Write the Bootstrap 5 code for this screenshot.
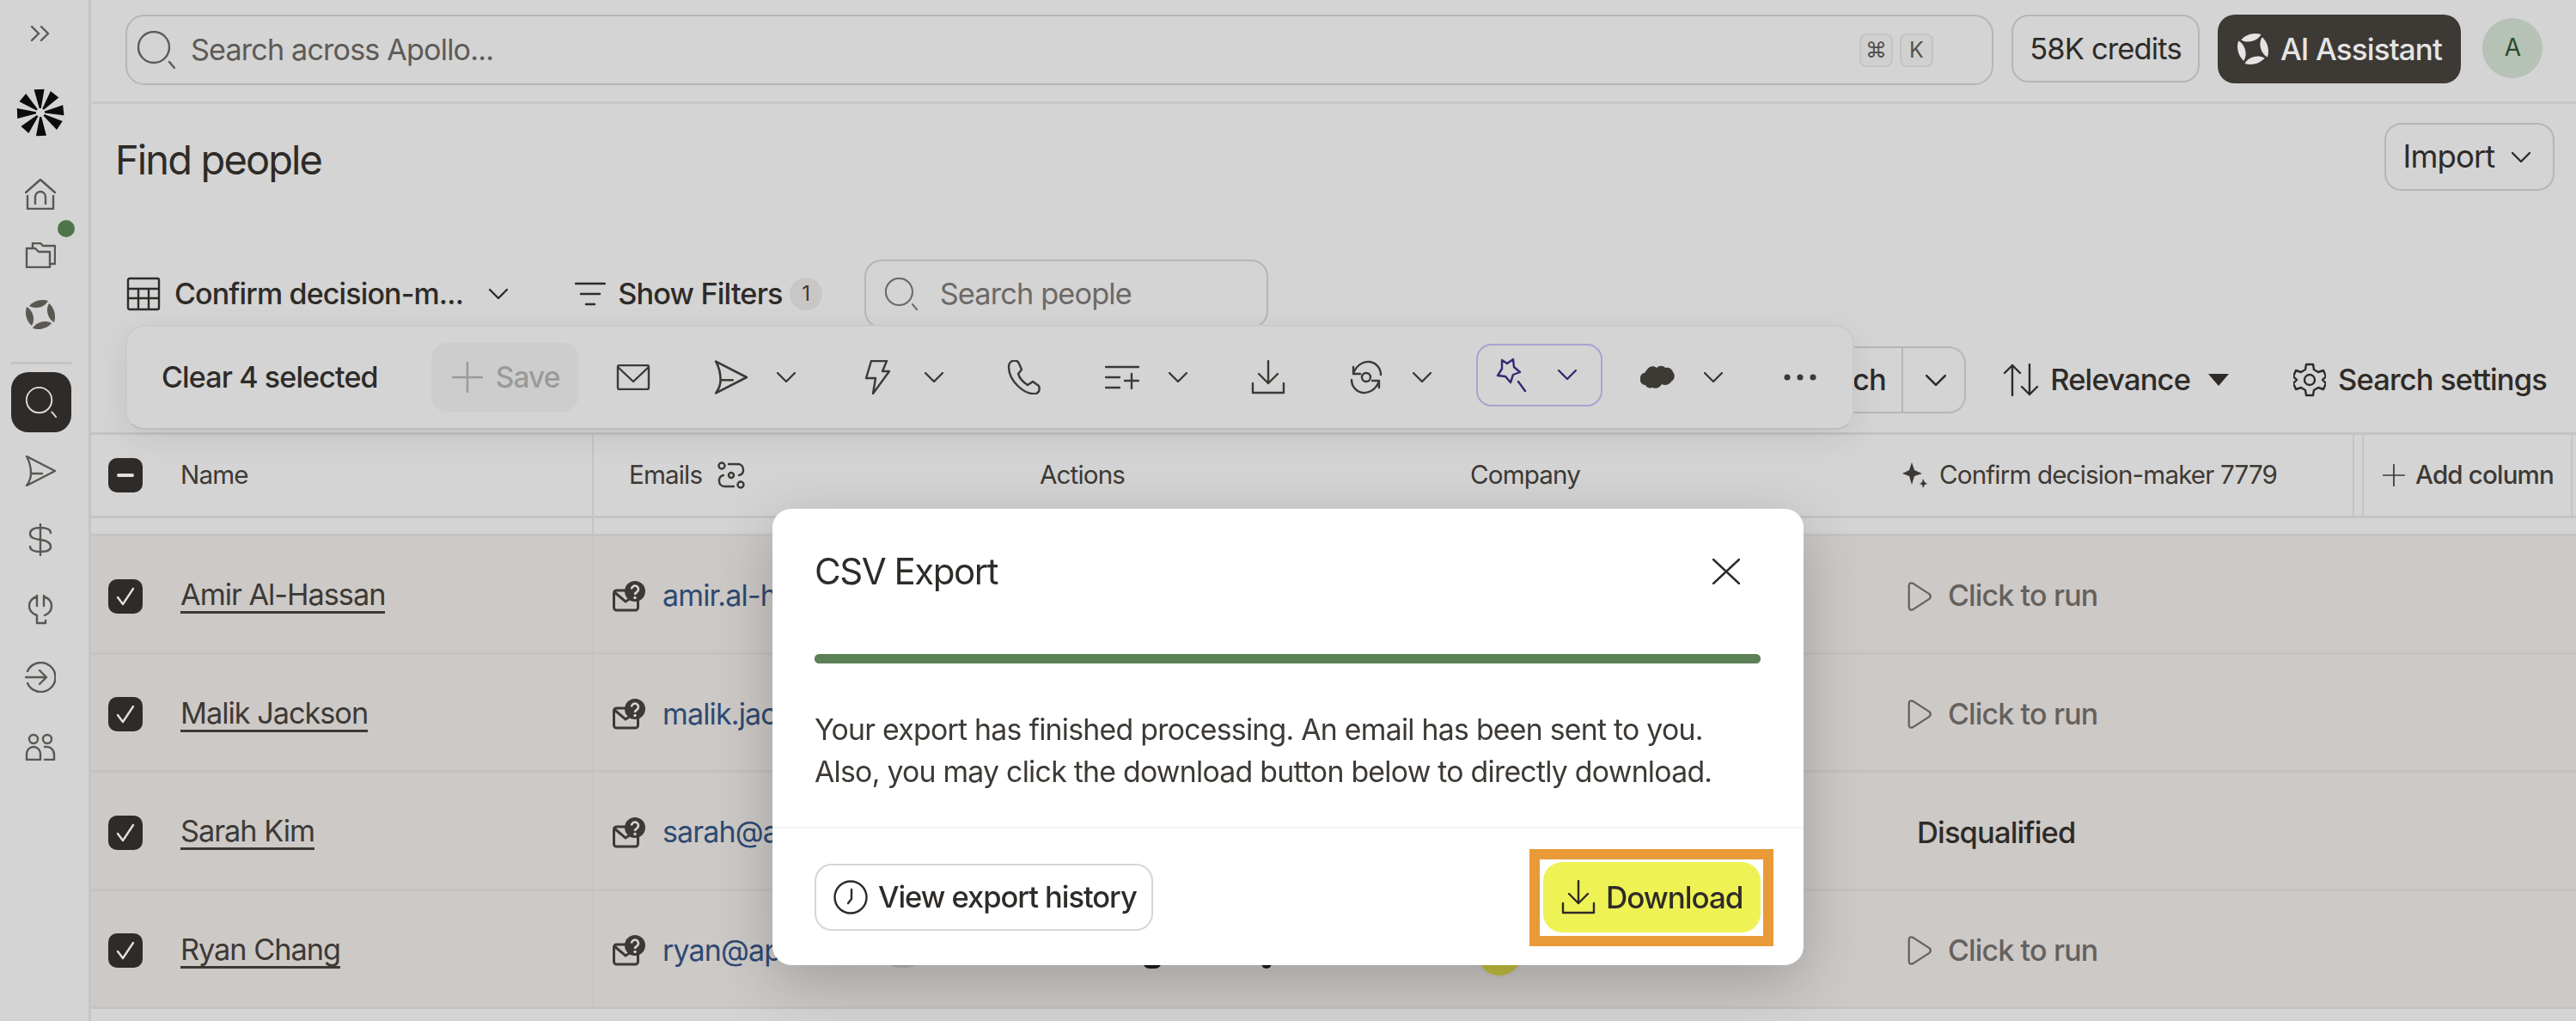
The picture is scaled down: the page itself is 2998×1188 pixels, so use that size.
<!DOCTYPE html>
<html lang="en">
<head>
<meta charset="utf-8">
<title>Find people</title>
<link href="https://cdn.jsdelivr.net/npm/bootstrap@5.3.0/dist/css/bootstrap.min.css" rel="stylesheet">
<style>
html,body{height:1188px;overflow:hidden}
body{background:#d4d4d4;font-family:Inter,"Liberation Sans",sans-serif;color:#2e2b28;font-size:34.3px;letter-spacing:-.025em;line-height:1.2}
svg.ic{display:block;flex:none;fill:none;stroke:currentColor;stroke-width:2.4;stroke-linecap:round;stroke-linejoin:round}
.side{width:106px;height:1188px;border-right:3px solid #c6c4c4;color:#5b5753;position:relative;flex:none}
.side-slot{display:flex;justify-content:center;position:absolute;left:0;width:94px}
.act-search{background:#2e2b28;color:#d9d9d9;width:70px;height:70px;border-radius:20px;display:flex;align-items:center;justify-content:center;margin-left:1px}
.green-dot{position:absolute;left:67px;top:256px;width:20px;height:20px;border-radius:50%;background:#4e7549}
.side-rule{position:absolute;left:12px;width:71px;top:421px;height:3px;background:#c6c4c4}
.main-col{flex:1;min-width:0;height:1188px}
.top-bar{height:121px;border-bottom:3px solid #c9c7c7;padding:17px 39px 0 40px;gap:21px}
.search-all{width:2174px;height:82px;border:2px solid #b9b5b5;border-radius:22px;padding:0 68px 0 12px;color:#5e5a57;font-size:34.2px}
.search-all-text{margin-left:2px}
.kbd-key{width:39px;height:39px;border:2px solid #c5c3c3;background:#d0d0d0;border-radius:8px;font-size:25px;color:#55514e;letter-spacing:0}
.outline-pill{border:2px solid #b9b5b5;border-radius:20px;height:79px;background:transparent;color:#2e2b28;font-size:34.5px;letter-spacing:-.025em}
.dark-pill{background:#3d3935;color:#e4e4e4;border-radius:20px;height:80px;width:283px;font-size:35px;font-weight:500;letter-spacing:-.025em;gap:13px}
.dark-pill:hover{background:#3d3935;color:#e4e4e4}
.user-dot{width:70px;height:70px;border-radius:50%;background:#b5c2b5;color:#2f4a2a;font-size:28px}
.import-btn{font-size:36.5px;width:198px;gap:20px;padding-right:6px!important}
.title-row{height:181px;padding:22px 25px 0 28px}
.page-title{font-size:47px;font-weight:400;margin:15px 0 0;letter-spacing:-.04em}
.filter-row{height:83px;padding-left:41px}
.confirm-text{font-size:34px}
.show-filters{height:80px;gap:14px;margin-left:78px}
.count-dot{width:38px;height:38px;border-radius:50%;background:#c9c7c5;font-size:24px;color:#3d3935;margin-left:-6px}
.people-search{width:470px;height:80px;border:2px solid #b9b5b5;border-radius:20px;color:#6d6966;padding-left:22px;margin-left:49px;gap:26px}
.sort-row{height:118px;padding:0 34px 4px 0;font-weight:500;font-size:34.5px}
.split-box{width:240px;height:78px;border:2px solid #b9b5b5;border-radius:0 20px 20px 0;border-left:0;margin-right:43px;padding-left:36px}
.split-rule{width:2px;height:100%;background:#b9b5b5;margin:0 26px 0 18px}
.data-row{display:grid;grid-template-columns:585px 499px 500px 505px 545px 11px 243px 4px}
.head-row{height:100px;border-top:3px solid #c4c2c2;border-bottom:3px solid #c6c4c4;font-size:29.6px;color:#3d3935}
.thin-row{height:21px;border-bottom:3px solid #c6c3c1}
.pick-row{height:137.5px;background:#cdc9c6;border-bottom:3px solid #c5c2bf;padding-top:5px}
.vline{border-right:2px solid #c6c4c4}
.pick-row .vline{margin-top:-5px;padding-top:5px}
.cell{display:flex;align-items:center;min-width:0}
.box-check{width:40px;height:40px;border-radius:10px;background:#2e2b28;color:#e0e0e0;margin:0 44px 0 20px;flex:none;display:flex;align-items:center;justify-content:center}
.person{color:#3d3935;font-size:34.3px;border-bottom:3px solid #3d3935;line-height:1.12;letter-spacing:-.03em}
.mail-addr{color:#2e4a73;font-size:34px;margin-left:20px;white-space:nowrap}
.run-hint{color:#65615e;font-size:34px;font-weight:500;gap:18px}
.verdict{font-weight:500;font-size:34.5px;margin-left:36px;color:#2e2b28}
.chip-blank{position:relative;top:-3px;height:46px;width:53px;border-radius:24px;background:#b4b4b4;margin:0 113px 0 auto;flex:none}
.chip-yellow{position:relative;top:6px;height:46px;width:48px;border-radius:24px;background:#c3bf3e;box-shadow:0 0 0 3px #c9c5c3}
.bit{position:relative;top:17px;height:8px;background:#1e1c1a;border-radius:0 0 8px 8px}
.float-bar{position:absolute;left:146px;top:378px;width:2012px;height:122px;background:#d4d4d4;border:2px solid #cbcaca;border-bottom-color:#bfbdbb;border-radius:22px;box-shadow:0 10px 36px rgba(0,0,0,.08);padding-left:40px;gap:74px;z-index:5;color:#3d3935}
.tool{display:flex;align-items:center;gap:34px}
.clear-label{font-weight:500;font-size:34px;color:#2e2b28;margin-right:-12px}
.save-off{width:171px;height:80px;border-radius:18px;background:#cdcdcd;color:#9c9a98;font-weight:500;font-size:33.5px;gap:15px;margin-right:-30px;padding-left:24px}
.tool-wide{margin-left:6px}
.ai-tool{width:147px;height:73px;border:2px solid #a9a3d1;border-radius:18px;color:#352a72;margin:-6px -30px 0 -22px;padding-left:21px}
.more-tool{margin-left:-3px}
.csv-modal{z-index:10;background:transparent;padding-top:592px}
.csv-dialog{max-width:1200px;width:1200px;margin:0 auto 0}
.csv-content{height:531px;border:0;border-radius:22px;box-shadow:0 20px 70px rgba(0,0,0,.22);color:#2e2b28}
.csv-head{height:110px;padding:36px 50px 0 49px;border:0;align-items:center}
.csv-title{font-size:42px;font-weight:400;letter-spacing:-.035em;line-height:1}
.csv-body{padding:59px 50px 0 49px;height:260px;flex:none}
.csv-bar{height:11px;border-radius:6px;background:#5b8055}
.csv-text{font-size:33.8px;line-height:49px;margin:52px 0 0;color:#3d3935;letter-spacing:-.022em;white-space:nowrap}
.csv-foot{border-top:2px solid #f2f2f2;padding:0 50px 0 49px;height:161px;flex-wrap:nowrap;justify-content:space-between;align-items:flex-start}
.history-btn{margin:41px 0 0;width:394px;height:78px;border:2px solid #d6d6d6;border-radius:20px;background:#fff;font-size:34.5px;font-weight:500;letter-spacing:-.03em;gap:12px;padding:0 0 0 20px;color:#2e2b28}
.dl-frame{border:12px solid #e89a38;width:284px;height:113px;margin:24px -15px 0 0;padding:3px 3px 4px 4px;background:#fff}
.dl-btn{width:100%;height:100%;border:0;border-radius:22px;background:#eef255;font-size:35px;font-weight:500;letter-spacing:-.03em;gap:12px;padding:0 0 0 21px;color:#2e2b28}
.dl-btn:hover{background:#eef255}
</style>
</head>
<body>
<svg width="0" height="0" class="position-absolute">
<defs>
<symbol id="i-search" viewBox="0 0 44 44"><circle cx="19" cy="19" r="18"/><path d="M37 36l6 7"/></symbol>
<symbol id="i-chev" viewBox="0 0 22 12"><path d="M1 1l10 10L21 1"/></symbol>
<symbol id="i-dbl" viewBox="0 0 24 18"><path d="M2 1l8 8-8 8M13 1l8 8-8 8"/></symbol>
<symbol id="i-home" viewBox="0 0 36 36"><path d="M1 16L18 1l17 15M3 20v15h30V20M12 29V21a6 6 0 0 1 12 0v8"/></symbol>
<symbol id="i-folder" viewBox="0 0 36 30"><path d="M2 29V7h10l4 4h13v18zM9 5V1h9l3 3h14v21h-5"/></symbol>
<symbol id="i-ball" viewBox="0 0 36 36"><g fill="currentColor" stroke="none"><path d="M5 8C9 3 18-1 27 2 24 8 14 13 5 8z"/><path d="M5 8C9 3 18-1 27 2 24 8 14 13 5 8z" transform="rotate(90 18 18)"/><path d="M5 8C9 3 18-1 27 2 24 8 14 13 5 8z" transform="rotate(180 18 18)"/><path d="M5 8C9 3 18-1 27 2 24 8 14 13 5 8z" transform="rotate(270 18 18)"/></g></symbol>
<symbol id="i-send" viewBox="0 0 36 36"><path d="M2 1l33 17L2 35q5-7 5-14h13M7 21Q7 10 2 1"/></symbol>
<symbol id="i-dollar" viewBox="0 0 30 38"><path d="M15 1v36M27 11c0-4-5-6-12-6S3 7 3 12s5 6 12 7 12 3 12 8-5 6-12 6-12-2-12-6"/></symbol>
<symbol id="i-plug" viewBox="0 0 30 36"><path d="M11 2v12M19 2v12M11 3C5 5 2 9 2 14c0 5 3 9 9 11v9h10v-3M19 3c6 2 9 6 9 11 0 5-3 9-8 11"/></symbol>
<symbol id="i-enter" viewBox="0 0 36 36"><path d="M3 11a17 17 0 1 1 0 14M1 18h24M17 10l8 8-8 8"/></symbol>
<symbol id="i-people" viewBox="0 0 36 32"><circle cx="10" cy="7" r="5"/><circle cx="26" cy="7" r="5"/><path d="M2 31v-6c0-6 4-9 8-9s8 3 8 9v6zM23 16c6-1 11 3 11 9v6h-11"/></symbol>
<symbol id="i-table" viewBox="0 0 40 40"><path d="M2 4q0-2 2-2h32q2 0 2 2v32q0 2-2 2H4q-2 0-2-2zM2 14h36M2 25h36M14 14v24M26 14v24"/></symbol>
<symbol id="i-filter" viewBox="0 0 36 28"><path d="M1 2h34M7 14h22M13 26h10"/></symbol>
<symbol id="i-plus" viewBox="0 0 36 36"><path d="M18 1v34M1 18h34"/></symbol>
<symbol id="i-mail" viewBox="0 0 40 30"><path d="M2 3q0-2 2-2h32q2 0 2 2v24q0 2-2 2H4q-2 0-2-2zM2 3l18 17L38 3"/></symbol>
<symbol id="i-bolt" viewBox="0 0 30 40"><path d="M8 1h18l-5 12h8L10 39l3-18H2z"/></symbol>
<symbol id="i-phone" viewBox="0 0 40 40"><path d="M6 1c4-1 7 0 8 3l3 7-4 5c2 6 6 10 11 13l6-4 7 5c1 3 1 7-3 9C20 41 2 24 2 8c0-3 2-6 4-7z"/></symbol>
<symbol id="i-list" viewBox="0 0 40 28"><path d="M1 2h38M1 14h16M1 26h16M31 10v17M23 18h16"/></symbol>
<symbol id="i-down" viewBox="0 0 40 40"><path d="M20 1v26M9 16l11 11 11-11M2 27v11h36V27"/></symbol>
<symbol id="i-cycle" viewBox="0 0 40 40"><circle cx="20" cy="20" r="5"/><path d="M5 8v8h8M5 16C8 6 17 1 24 2c8 1 13 8 13 15M35 32v-8h-8M35 24c-3 10-12 15-19 14C8 37 3 30 3 23"/></symbol>
<symbol id="i-wand" viewBox="0 0 38 40"><path d="M7 3l6 4 7-5 1 9 7 6-8 3-3 9-6-7-9-1 5-8zM26 28l8 11"/></symbol>
<symbol id="i-cloud" viewBox="0 0 40 28"><path fill="currentColor" stroke="none" d="M8 5c2-4 8-5 11-2 3-3 8-3 10 0 4-1 8 1 9 5 3 3 2 9-2 11-2 4-8 5-11 3-2 4-7 6-11 4-3 1-7 0-8-3-4 0-7-4-6-8 0-3 2-6 5-6 1-2 2-3 3-4z"/></symbol>
<symbol id="i-link" viewBox="0 0 32 32"><circle cx="5" cy="5" r="3.5"/><circle cx="16" cy="16" r="3"/><circle cx="27" cy="27" r="3.5"/><path d="M13 3h11a6 6 0 0 1 6 6v2a6 6 0 0 1-5 5M19 29H8a6 6 0 0 1-6-6v-2a6 6 0 0 1 5-5"/></symbol>
<symbol id="i-check" viewBox="0 0 24 24"><path d="M3 13l6 8L21 3"/></symbol>
<symbol id="i-spark" viewBox="0 0 30 30"><g fill="currentColor" stroke="none"><path d="M11 0l3 9 9 4-9 3-3 10-3-10-8-3 8-4z"/><path d="M24 19l2 4 3 2-3 1-2 4-1-4-3-1 3-2z"/></g></symbol>
<symbol id="i-play" viewBox="0 0 30 38"><path d="M2 6q0-5 5-3 3 2 20 13 3 3 0 6L7 35q-5 2-5-3z"/></symbol>
<symbol id="i-arrows" viewBox="0 0 42 38"><path d="M11 37V2M2 11l9-9 9 9M31 1v35M22 27l9 9 9-9"/></symbol>
<symbol id="i-gear" viewBox="0 0 38 40"><circle cx="19" cy="20" r="6"/><path d="M15 2h8l1 6 5 3 6-2 3 7-4 4 4 4-3 7-6-2-5 3-1 6h-8l-1-6-5-3-6 2-3-7 4-4-4-4 3-7 6 2 5-3z"/></symbol>
<symbol id="i-close" viewBox="0 0 32 30"><path d="M1 1l30 28M31 1L1 29"/></symbol>
<symbol id="i-clock" viewBox="0 0 40 40"><circle cx="20" cy="20" r="18.5"/><path d="M21 11v11l-4 5"/></symbol>
<symbol id="i-mailq" viewBox="0 0 38 36"><rect x="1.5" y="11" width="28" height="23" rx="3" fill="none" stroke="#3d3935" stroke-width="3"/><path d="M2 13l13 11 14-9" fill="none" stroke="#3d3935" stroke-width="3"/><circle cx="26" cy="12" r="12" fill="#3d3935"/><path d="M22 9.500a4 4 0 1 1 6 3.500q-2 1-2 3" fill="none" stroke="#d9d5d2" stroke-width="2.600"/><circle cx="26" cy="19.500" r="1.700" fill="#d9d5d2"/></symbol>
</defs>
</svg>

<div class="d-flex">
  <aside class="side">
    <div class="side-slot" style="top:30px"><svg class="ic" width="24" height="18"><use href="#i-dbl"/></svg></div>
    <div class="side-slot" style="top:103px">
      <svg width="56" height="56" viewBox="-28 -28 56 56" aria-label="Apollo logo"><g fill="#0c0c0c">
        <path d="M-1-5-6-27 6-27 1-5z" transform="rotate(-3)"/><path d="M-1-5-6-27 6-27 1-5z" transform="rotate(38)"/><path d="M-1-5-6-27 6-27 1-5z" transform="rotate(84)"/><path d="M-1-5-6-27 6-27 1-5z" transform="rotate(124)"/><path d="M-1-5-6-27 6-27 1-5z" transform="rotate(178)"/><path d="M-1-5-6-27 6-27 1-5z" transform="rotate(222)"/><path d="M-1-5-6-27 6-27 1-5z" transform="rotate(268)"/><path d="M-1-5-6-27 6-27 1-5z" transform="rotate(310)"/>
      </g></svg>
    </div>
    <div class="side-slot" style="top:208px"><svg class="ic" width="36" height="36"><use href="#i-home"/></svg></div>
    <span class="green-dot"></span>
    <div class="side-slot" style="top:282px"><svg class="ic" width="36" height="30"><use href="#i-folder"/></svg></div>
    <div class="side-slot" style="top:348px"><svg class="ic" width="36" height="36"><use href="#i-ball"/></svg></div>
    <div class="side-rule"></div>
    <div class="side-slot" style="top:433px"><div class="act-search"><svg class="ic" width="36" height="36"><use href="#i-search"/></svg></div></div>
    <div class="side-slot" style="top:530px"><svg class="ic" width="36" height="36"><use href="#i-send"/></svg></div>
    <div class="side-slot" style="top:609px"><svg class="ic" width="30" height="38"><use href="#i-dollar"/></svg></div>
    <div class="side-slot" style="top:691px"><svg class="ic" width="30" height="36"><use href="#i-plug"/></svg></div>
    <div class="side-slot" style="top:770px"><svg class="ic" width="36" height="36"><use href="#i-enter"/></svg></div>
    <div class="side-slot" style="top:853px"><svg class="ic" width="36" height="32"><use href="#i-people"/></svg></div>
  </aside>

  <main class="main-col">
    <header class="top-bar d-flex align-items-start">
      <div class="search-all d-flex align-items-center">
        <svg class="ic me-3" width="44" height="44"><use href="#i-search"/></svg>
        <span class="flex-grow-1 search-all-text">Search across Apollo...</span>
        <span class="kbd-key d-flex align-items-center justify-content-center me-2">⌘</span>
        <span class="kbd-key d-flex align-items-center justify-content-center">K</span>
      </div>
      <button class="btn outline-pill px-0 text-center" style="width:219px">58K credits</button>
      <button class="btn dark-pill d-flex align-items-center justify-content-center px-0"><svg class="ic" width="38" height="38"><use href="#i-ball"/></svg>AI Assistant</button>
      <div class="user-dot d-flex align-items-center justify-content-center mt-1" style="margin-left:4px">A</div>
    </header>

    <section class="title-row d-flex justify-content-between align-items-start">
      <h1 class="page-title">Find people</h1>
      <button class="btn outline-pill import-btn d-flex align-items-center px-0 justify-content-center">Import <svg class="ic" width="22" height="12"><use href="#i-chev"/></svg></button>
    </section>

    <section class="filter-row d-flex align-items-start">
      <div class="d-flex align-items-center fw-medium" style="height:80px;gap:16px"><svg class="ic" width="40" height="40"><use href="#i-table"/></svg><span class="confirm-text">Confirm decision-m...</span><svg class="ic" style="margin-left:14px" width="22" height="12"><use href="#i-chev"/></svg></div>
      <div class="show-filters d-flex align-items-center fw-medium"><svg class="ic" width="36" height="28"><use href="#i-filter"/></svg><span>Show Filters</span><span class="count-dot d-flex align-items-center justify-content-center fw-normal">1</span></div>
      <div class="people-search d-flex align-items-center"><svg class="ic" width="38" height="38"><use href="#i-search"/></svg><span>Search people</span></div>
    </section>

    <section class="sort-row d-flex align-items-center justify-content-end">
      <div class="split-box d-flex align-items-center"><span>Search</span><span class="split-rule"></span><svg class="ic" width="24" height="13"><use href="#i-chev"/></svg></div>
      <div class="d-flex align-items-center" style="gap:13px;margin-right:75px"><svg class="ic" width="42" height="38"><use href="#i-arrows"/></svg><span>Relevance</span><svg class="ms-2" width="24" height="14" viewBox="0 0 24 14"><path d="M0 0h24L12 14z" fill="#2e2b28"/></svg></div>
      <div class="d-flex align-items-center" style="gap:14px"><svg class="ic" width="38" height="40"><use href="#i-gear"/></svg><span>Search settings</span></div>
    </section>

    <div class="data-row head-row">
      <div class="cell vline"><span class="box-check"><svg width="20" height="4"><rect width="20" height="4" rx="2" fill="#e0e0e0"/></svg></span>Name</div>
      <div class="cell" style="padding-left:41px;gap:18px">Emails <svg class="ic" width="32" height="32"><use href="#i-link"/></svg></div>
      <div class="cell" style="padding-left:20px">Actions</div>
      <div class="cell" style="padding-left:21px">Company</div>
      <div class="cell vline" style="padding-left:19px;gap:13px"><svg class="ic" width="30" height="30"><use href="#i-spark"/></svg>Confirm decision-maker 7779</div>
      <div class="vline"></div>
      <div class="cell vline" style="padding-left:22px;gap:12px;font-weight:500"><svg class="ic" width="26" height="26"><use href="#i-plus"/></svg>Add column</div>
      <div></div>
    </div>
    <div class="data-row thin-row"><div class="vline"></div></div>

    <div class="data-row pick-row">
      <div class="cell vline"><span class="box-check"><svg class="ic" width="24" height="24"><use href="#i-check"/></svg></span><span class="person">Amir Al-Hassan</span></div>
      <div class="cell" style="padding-left:22px"><svg width="38" height="36"><use href="#i-mailq"/></svg><span class="mail-addr">amir.al-hassan</span></div>
      <div></div><div></div>
      <div class="cell run-hint" style="padding-left:24px"><svg class="ic" width="30" height="36"><use href="#i-play"/></svg>Click to run</div>
    </div>
    <div class="data-row pick-row">
      <div class="cell vline"><span class="box-check"><svg class="ic" width="24" height="24"><use href="#i-check"/></svg></span><span class="person">Malik Jackson</span></div>
      <div class="cell" style="padding-left:22px"><svg width="38" height="36"><use href="#i-mailq"/></svg><span class="mail-addr">malik.jackson</span></div>
      <div></div><div></div>
      <div class="cell run-hint" style="padding-left:24px"><svg class="ic" width="30" height="36"><use href="#i-play"/></svg>Click to run</div>
    </div>
    <div class="data-row pick-row">
      <div class="cell vline"><span class="box-check"><svg class="ic" width="24" height="24"><use href="#i-check"/></svg></span><span class="person">Sarah Kim</span></div>
      <div class="cell" style="padding-left:22px"><svg width="38" height="36"><use href="#i-mailq"/></svg><span class="mail-addr">sarah@apollo</span></div>
      <div></div><div></div>
      <div class="cell"><span class="verdict">Disqualified</span></div>
    </div>
    <div class="data-row pick-row">
      <div class="cell vline"><span class="box-check"><svg class="ic" width="24" height="24"><use href="#i-check"/></svg></span><span class="person">Ryan Chang</span></div>
      <div class="cell" style="padding-left:22px"><svg width="38" height="36"><use href="#i-mailq"/></svg><span class="mail-addr">ryan@apollo</span><span class="chip-blank"></span></div>
      <div class="cell" style="gap:116px;padding-left:140px"><span class="bit" style="width:22px"></span><span class="bit" style="width:12px"></span></div>
      <div class="cell" style="padding-left:31px"><span class="chip-yellow"></span></div>
      <div class="cell run-hint" style="padding-left:24px"><svg class="ic" width="30" height="36"><use href="#i-play"/></svg>Click to run</div>
    </div>
  </main>
</div>

<div class="float-bar d-flex align-items-center">
  <span class="clear-label">Clear 4 selected</span>
  <span class="save-off d-flex align-items-center"><svg class="ic" width="36" height="36"><use href="#i-plus"/></svg>Save</span>
  <div class="tool"><svg class="ic" width="40" height="30"><use href="#i-mail"/></svg></div>
  <div class="tool"><svg class="ic" width="39" height="40"><use href="#i-send"/></svg><svg class="ic" width="22" height="12"><use href="#i-chev"/></svg></div>
  <div class="tool tool-wide"><svg class="ic" width="30" height="40"><use href="#i-bolt"/></svg><svg class="ic" style="margin-left:6px" width="22" height="12"><use href="#i-chev"/></svg></div>
  <div class="tool"><svg class="ic" width="40" height="40"><use href="#i-phone"/></svg></div>
  <div class="tool"><svg class="ic" width="40" height="28"><use href="#i-list"/></svg><svg class="ic" width="22" height="12"><use href="#i-chev"/></svg></div>
  <div class="tool"><svg class="ic" width="40" height="40"><use href="#i-down"/></svg></div>
  <div class="tool"><svg class="ic" width="40" height="40"><use href="#i-cycle"/></svg><svg class="ic" width="22" height="12"><use href="#i-chev"/></svg></div>
  <div class="tool ai-tool"><svg class="ic" width="38" height="40"><use href="#i-wand"/></svg><svg class="ic" width="22" height="12"><use href="#i-chev"/></svg></div>
  <div class="tool"><svg class="ic" width="40" height="28"><use href="#i-cloud"/></svg><svg class="ic" width="22" height="12"><use href="#i-chev"/></svg></div>
  <svg class="more-tool" width="38" height="8" viewBox="0 0 38 8"><circle cx="4" cy="4" r="3.5" fill="#3d3935"/><circle cx="19" cy="4" r="3.5" fill="#3d3935"/><circle cx="34" cy="4" r="3.5" fill="#3d3935"/></svg>
</div>

<div class="modal d-block csv-modal" role="dialog">
  <div class="modal-dialog csv-dialog">
    <div class="modal-content csv-content">
      <div class="modal-header csv-head">
        <h5 class="modal-title csv-title">CSV Export</h5>
        <svg class="ic ms-auto" style="margin-right:24px" width="32" height="30"><use href="#i-close"/></svg>
      </div>
      <div class="modal-body csv-body">
        <div class="progress csv-bar"><div class="progress-bar w-100 csv-bar"></div></div>
        <p class="csv-text">Your export has finished processing. An email has been sent to you.<br>Also, you may click the download button below to directly download.</p>
      </div>
      <div class="modal-footer csv-foot">
        <button class="btn history-btn d-flex align-items-center"><svg class="ic" width="40" height="40"><use href="#i-clock"/></svg>View export history</button>
        <div class="dl-frame"><button class="btn dl-btn d-flex align-items-center"><svg class="ic" width="40" height="40"><use href="#i-down"/></svg>Download</button></div>
      </div>
    </div>
  </div>
</div>
<script src="https://cdn.jsdelivr.net/npm/bootstrap@5.3.0/dist/js/bootstrap.bundle.min.js"></script>
</body>
</html>
